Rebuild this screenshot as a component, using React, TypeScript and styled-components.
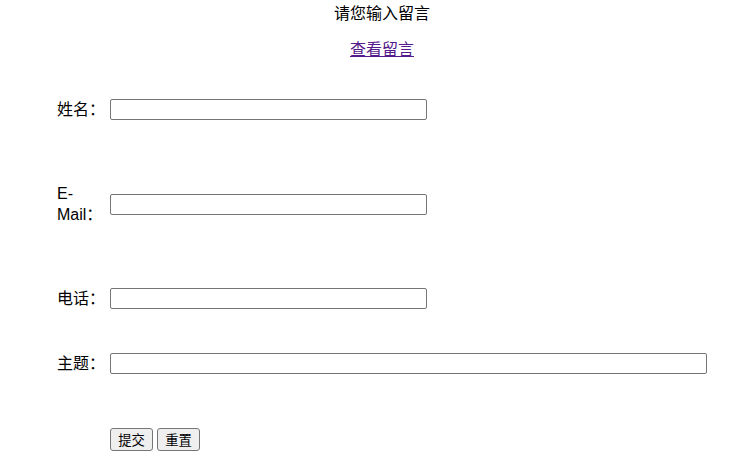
import React from "react";
import styled, { createGlobalStyle } from "styled-components";

const Global = createGlobalStyle`
  html, body { margin: 0; padding: 0; background: #fff; }
  body { font-family: "Noto Sans CJK SC", "Microsoft YaHei", sans-serif; font-size: 16px; color: #000; }
`;

const Header = styled.div`
  padding-left: 24px;
  text-align: center;
`;

const Title = styled.div`
  padding-top: 2px;
  line-height: 20px;
  font-size: 16px;
`;

const LinkLine = styled.div`
  margin-top: 16px;
  line-height: 20px;
`;

const ViewLink = styled.a`
  color: #551a8b;
  text-decoration: underline;
  font-size: 16px;
`;

const Form = styled.form`
  padding-left: 57px;
  padding-top: 41px;
`;

const Row = styled.div<{ $gap: number }>`
  display: grid;
  grid-template-columns: 50px auto;
  column-gap: 3px;
  align-items: center;
  margin-top: ${(p) => p.$gap}px;
`;

const Label = styled.label`
  font-family: "Liberation Sans", "Noto Sans CJK SC", sans-serif;
  font-size: 16px;
  line-height: 21px;
`;

const Input = styled.input<{ $w: number }>`
  box-sizing: border-box;
  width: ${(p) => p.$w}px;
  height: 21px;
  border: 1px solid #767676;
  border-radius: 2px;
  padding: 1px 2px;
  margin: 0;
  background: #fff;
  font-size: 13px;
`;

const Buttons = styled.div`
  display: flex;
  gap: 4px;
  margin-top: 54px;
  padding-left: 53px;
`;

const Button = styled.button`
  box-sizing: border-box;
  width: 43px;
  height: 23px;
  padding: 0;
  margin: 0;
  border: 1px solid #767676;
  border-radius: 3px;
  background: #efefef;
  color: #000;
  font-family: "Noto Sans CJK SC", sans-serif;
  font-size: 13.33px;
  line-height: 21px;
`;

export default function App() {
  return (
    <>
      <Global />
      <Header>
        <Title>请您输入留言</Title>
        <LinkLine>
          <ViewLink href="#">查看留言</ViewLink>
        </LinkLine>
      </Header>
      <Form onSubmit={(e) => e.preventDefault()}>
        <Row $gap={0}>
          <Label>姓名：</Label>
          <Input $w={317} type="text" />
        </Row>
        <Row $gap={63}>
          <Label>
            E-
            <br />
            Mail：
          </Label>
          <Input $w={317} type="text" />
        </Row>
        <Row $gap={63}>
          <Label>电话：</Label>
          <Input $w={317} type="text" />
        </Row>
        <Row $gap={44}>
          <Label>主题：</Label>
          <Input $w={597} type="text" />
        </Row>
        <Buttons>
          <Button type="submit">提交</Button>
          <Button type="reset">重置</Button>
        </Buttons>
      </Form>
    </>
  );
}
